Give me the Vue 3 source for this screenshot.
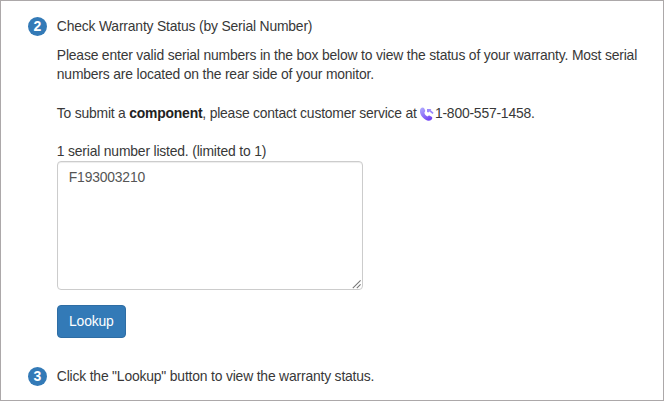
<script setup>
import { ref } from 'vue'

const serials = ref('F193003210')
</script>

<template>
  <main class="panel">
    <section class="step">
      <span class="badge">2</span>
      <div class="body">
        <h2>Check Warranty Status (by Serial Number)</h2>
        <p class="intro">
          Please enter valid serial numbers in the box below to view the status of your warranty. Most serial<br />
          numbers are located on the rear side of your monitor.
        </p>
        <p class="contact">
          To submit a <strong>component</strong>, please contact customer service at
          <span class="phone"><svg class="phone-icon" viewBox="0 0 14 14" aria-hidden="true">
            <defs>
              <linearGradient id="handset" x1="0" y1="0" x2="0.6" y2="1">
                <stop offset="0" stop-color="#b4b0ff" />
                <stop offset="1" stop-color="#7447f4" />
              </linearGradient>
            </defs>
            <path
              fill="url(#handset)"
              d="M.7 1.6C1.6.4 3.5.2 4.3 1.4L5.2 3.4C5.5 4.3 4.6 5 4.4 5.8C4.7 7.5 5.9 8.8 7.4 9.4C8.2 9.2 8.8 8.3 9.7 8.7L11.6 9.8C12.6 10.4 12.4 11.7 11.7 12.4C9.4 14.7 5.7 13.8 2.8 10.6C0 7.4-.9 3.8.7 1.6Z"
            />
            <path fill="#9b88fb" d="M7 1.9H11.4L10.5 3.1L13.6 5.8L12.6 7L9.4 4.4L8.3 5.6L7 5Z" />
          </svg>1-800-557-1458.</span>
        </p>
        <label for="serials">1 serial number listed. (limited to 1)</label>
        <div class="field">
          <textarea id="serials" v-model="serials" spellcheck="false" />
          <svg class="grip" viewBox="0 0 10 10" aria-hidden="true">
            <path d="M.8 9.2L8.6 1.4M4.8 9.2L8.6 5.4" />
          </svg>
        </div>
        <button type="button">Lookup</button>
      </div>
    </section>
    <section class="step last">
      <span class="badge">3</span>
      <div class="body">Click the "Lookup" button to view the warranty status.</div>
    </section>
  </main>
</template>

<style>
body {
  margin: 0;
  background: #fff;
}
</style>

<style scoped>
.panel {
  box-sizing: border-box;
  width: 664px;
  height: 401px;
  padding: 16px 0 0 27px;
  overflow: hidden;
  border: 1px solid #aca8a9;
  font-family: 'Liberation Sans', Arial, sans-serif;
  font-size: 13.9px;
  letter-spacing: -0.18px;
  line-height: 19.2px;
  color: #383838;
}
.step {
  display: flex;
  gap: 9.8px;
}
.badge {
  flex: none;
  width: 19px;
  height: 19px;
  border-radius: 50%;
  background: #337ab7;
  color: #fff;
  font-size: 14px;
  font-weight: bold;
  line-height: 19px;
  letter-spacing: 0;
  text-align: center;
}
.body {
  white-space: nowrap;
}
h2 {
  margin: 0 0 9.5px;
  font-size: inherit;
  font-weight: normal;
}
p {
  margin: 0;
}
.contact {
  margin: 20px 0 18.4px;
  letter-spacing: -0.2px;
}
strong {
  color: #222;
}
.phone-icon {
  width: 14px;
  height: 14px;
  margin-right: 0.5px;
  vertical-align: -3px;
}
label {
  display: block;
}
.field {
  position: relative;
  width: 306.5px;
}
textarea {
  display: block;
  box-sizing: border-box;
  width: 100%;
  height: 129.5px;
  margin: 0;
  padding: 6px 11px;
  border: 1px solid #ccc;
  border-radius: 4px;
  outline: none;
  box-shadow: inset 0 1px 1px rgba(0, 0, 0, 0.075);
  background: #fff;
  color: #555;
  font: inherit;
  letter-spacing: inherit;
  resize: none;
}
.grip {
  position: absolute;
  right: 1px;
  bottom: 1px;
  width: 10px;
  height: 10px;
  fill: none;
  stroke: #777;
  stroke-width: 1.1;
  pointer-events: none;
}
button {
  display: block;
  box-sizing: border-box;
  width: 69px;
  height: 33px;
  margin-top: 14.8px;
  padding: 0;
  border: 1px solid #2e6da4;
  border-radius: 4px;
  background: #337ab7;
  color: #fff;
  font: inherit;
  letter-spacing: inherit;
  cursor: pointer;
}
.last {
  margin-top: 29px;
}
</style>
